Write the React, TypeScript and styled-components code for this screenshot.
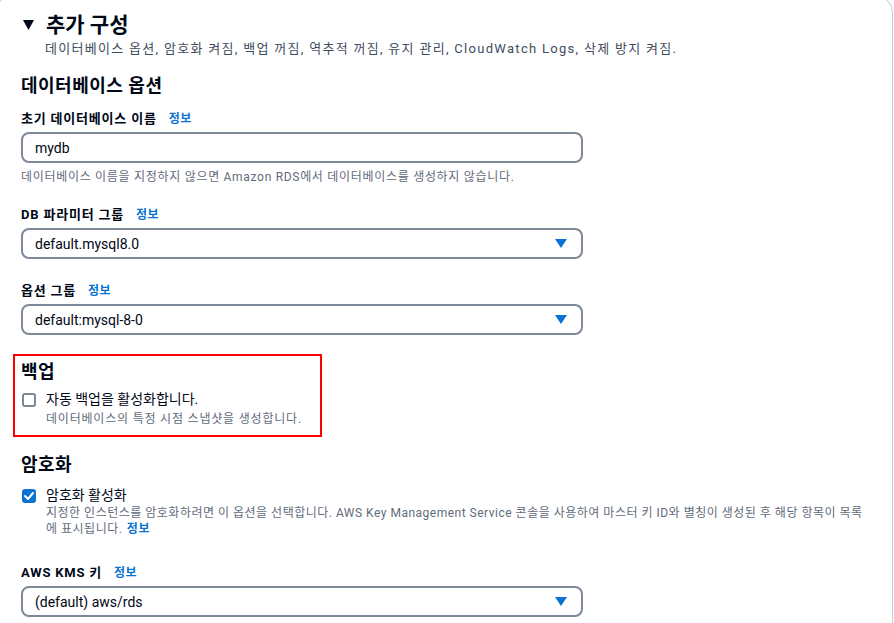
import React from "react";
import styled, { createGlobalStyle } from "styled-components";

const Global = createGlobalStyle`
  html, body { margin: 0; padding: 0; background: #ffffff; overflow: hidden; }
  body { font-family: Roboto, "Noto Sans CJK KR", sans-serif; color: #000716; }
  * { box-sizing: border-box; }
`;

const Page = styled.div`
  width: 894px;
  height: 623px;
  overflow: hidden;
  background: #fff;
`;

const Card = styled.section`
  margin: -4px 0 0 -5px;
  width: 898px;
  min-height: 700px;
  border: 1px solid #c6c6cd;
  border-radius: 16px;
  padding: 17px 0 0 25px;
`;

const Header = styled.div`
  display: flex;
  flex-direction: column;
`;

const TitleRow = styled.div`
  display: flex;
  align-items: center;
  gap: 12px;
  height: 22px;
  margin-left: 2px;
`;

const Caret = styled.svg`
  width: 11px;
  height: 10px;
  flex: none;
`;

const Title = styled.h2`
  margin: 0;
  font-size: 21px;
  font-weight: 700;
  line-height: 22px;
  color: #000716;
`;

const Subtitle = styled.div`
  margin: 3px 0 0 24px;
  font-size: 13px;
  letter-spacing: 1.3px;
  line-height: 20px;
  color: #414d5c;
`;

const Section = styled.div<{ $top: number }>`
  display: flex;
  flex-direction: column;
  margin-top: ${(p) => p.$top}px;
`;

const Heading = styled.h3`
  margin: 0;
  font-size: 18px;
  letter-spacing: 0.5px;
  font-weight: 700;
  line-height: 22px;
  color: #000716;
`;

const Field = styled.div<{ $top: number }>`
  display: flex;
  flex-direction: column;
  margin-top: ${(p) => p.$top}px;
`;

const LabelRow = styled.div`
  display: flex;
  align-items: baseline;
  gap: 12px;
  line-height: 20px;
`;

const Label = styled.span`
  font-size: 13px;
  letter-spacing: 0.8px;
  font-weight: 700;
  color: #000716;
`;

const Info = styled.a`
  font-size: 12px;
  letter-spacing: 0.5px;
  font-weight: 700;
  color: #0972d3;
  text-decoration: none;
`;

const Control = styled.div`
  margin-top: 3px;
  width: 562px;
  height: 31px;
  border: 2px solid #7d8998;
  border-radius: 8px;
  display: flex;
  align-items: center;
  justify-content: space-between;
  padding: 0 14px 0 12px;
  font-size: 14px;
  color: #000716;
`;

const Arrow = styled.svg`
  width: 12px;
  height: 9px;
`;

const Hint = styled.div`
  margin-top: 6px;
  font-size: 12px;
  letter-spacing: 0.7px;
  line-height: 16px;
  color: #5f6b7a;
`;

const Highlight = styled.div`
  margin: 19px 0 0 -8px;
  width: 309px;
  height: 83px;
  border: 2px solid #ff0000;
  padding: 5px 0 0 6px;
`;

const CheckRow = styled.div<{ $top: number }>`
  display: flex;
  gap: 10px;
  margin-top: ${(p) => p.$top}px;
  align-items: flex-start;
`;

const Box = styled.div<{ $on?: boolean }>`
  flex: none;
  width: 14px;
  height: 14px;
  margin-top: 4px;
  margin-left: 1px;
  border-radius: 3px;
  border: ${(p) => (p.$on ? "none" : "2px solid #7d8998")};
  background: ${(p) => (p.$on ? "#0972d3" : "#fff")};
  display: flex;
  align-items: center;
  justify-content: center;
`;

const CheckText = styled.div`
  display: flex;
  flex-direction: column;
`;

const CheckLabel = styled.div`
  font-size: 14px;
  line-height: 20px;
  color: #000716;
`;

const CheckDesc = styled.div<{ $gap?: number; $spacing?: number }>`
  margin-top: ${(p) => p.$gap ?? 0}px;
  font-size: 12px;
  letter-spacing: ${(p) => p.$spacing ?? 0.8}px;
  line-height: 16px;
  color: #5f6b7a;
  max-width: 824px;
`;

const InlineLink = styled.a`
  margin-left: 1px;
  color: #0972d3;
  font-weight: 700;
  text-decoration: none;
`;

const DownArrow = () => (
  <Arrow viewBox="0 0 12 9">
    <path d="M0 0 L12 0 L6 9 Z" fill="#0972d3" />
  </Arrow>
);

export default function App() {
  return (
    <Page>
      <Global />
      <Card>
        <Header>
          <TitleRow>
            <Caret viewBox="0 0 11 10">
              <path d="M0 0 L11 0 L5.5 10 Z" fill="#000716" />
            </Caret>
            <Title>추가 구성</Title>
          </TitleRow>
          <Subtitle>
            데이터베이스 옵션, 암호화 켜짐, 백업 꺼짐, 역추적 꺼짐, 유지 관리, CloudWatch Logs, 삭제 방지 켜짐.
          </Subtitle>
        </Header>

        <Section $top={16}>
          <Heading>데이터베이스 옵션</Heading>
          <Field $top={12}>
            <LabelRow>
              <Label>초기 데이터베이스 이름</Label>
              <Info>정보</Info>
            </LabelRow>
            <Control>mydb</Control>
            <Hint>데이터베이스 이름을 지정하지 않으면 Amazon RDS에서 데이터베이스를 생성하지 않습니다.</Hint>
          </Field>
          <Field $top={20}>
            <LabelRow>
              <Label>DB 파라미터 그룹</Label>
              <Info>정보</Info>
            </LabelRow>
            <Control>
              default.mysql8.0
              <DownArrow />
            </Control>
          </Field>
          <Field $top={22}>
            <LabelRow>
              <Label>옵션 그룹</Label>
              <Info>정보</Info>
            </LabelRow>
            <Control>
              default:mysql-8-0
              <DownArrow />
            </Control>
          </Field>
        </Section>

        <Highlight>
          <Heading>백업</Heading>
          <CheckRow $top={6}>
            <Box />
            <CheckText>
              <CheckLabel>자동 백업을 활성화합니다.</CheckLabel>
              <CheckDesc $gap={2}>데이터베이스의 특정 시점 스냅샷을 생성합니다.</CheckDesc>
            </CheckText>
          </CheckRow>
        </Highlight>

        <Section $top={17}>
          <Heading>암호화</Heading>
          <CheckRow $top={9}>
            <Box $on>
              <svg width="10" height="8" viewBox="0 0 10 8">
                <path d="M1 4 L4 7 L9 1" stroke="#fff" strokeWidth="2" fill="none" strokeLinecap="round" strokeLinejoin="round" />
              </svg>
            </Box>
            <CheckText>
              <CheckLabel>암호화 활성화</CheckLabel>
              <CheckDesc $spacing={0.5}>
                지정한 인스턴스를 암호화하려면 이 옵션을 선택합니다. AWS Key Management Service 콘솔을 사용하여 마스터 키 ID와 별칭이 생성된 후 해당 항목이 목록에 표시됩니다. <InlineLink>정보</InlineLink>
              </CheckDesc>
            </CheckText>
          </CheckRow>
          <Field $top={26}>
            <LabelRow>
              <Label>AWS KMS 키</Label>
              <Info>정보</Info>
            </LabelRow>
            <Control>
              (default) aws/rds
              <DownArrow />
            </Control>
          </Field>
        </Section>
      </Card>
    </Page>
  );
}
